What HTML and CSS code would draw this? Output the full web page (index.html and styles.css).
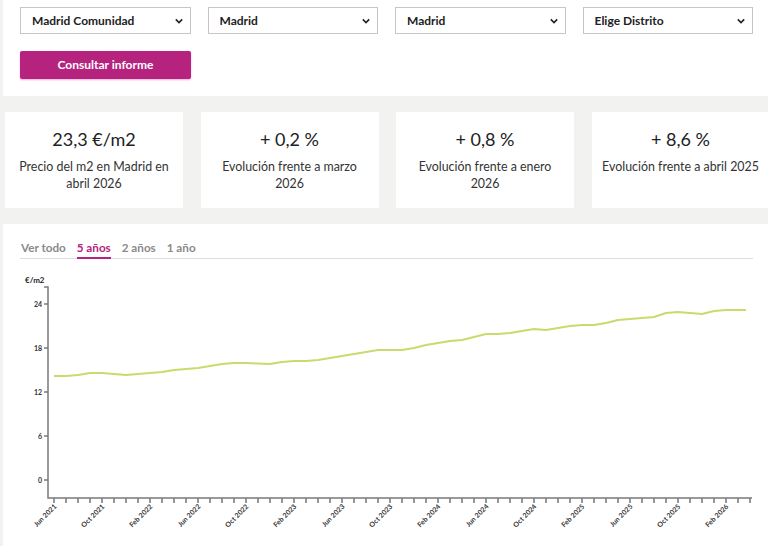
FILE: index.html
```html
<!DOCTYPE html>
<html lang="es">
<head>
    <meta charset="utf-8">
    <title>Precio del m2 en Madrid</title>
    <link rel="stylesheet" href="styles.css">
</head>
<body>
    <div class="filters">
        <div class="selects">
            <div class="select-wrap">
                <select><option>Madrid Comunidad</option></select>
                <svg class="chevron" viewBox="0 0 10 6"><path d="M1 1l4 4 4-4"/></svg>
            </div>
            <div class="select-wrap">
                <select><option>Madrid</option></select>
                <svg class="chevron" viewBox="0 0 10 6"><path d="M1 1l4 4 4-4"/></svg>
            </div>
            <div class="select-wrap">
                <select><option>Madrid</option></select>
                <svg class="chevron" viewBox="0 0 10 6"><path d="M1 1l4 4 4-4"/></svg>
            </div>
            <div class="select-wrap">
                <select><option>Elige Distrito</option></select>
                <svg class="chevron" viewBox="0 0 10 6"><path d="M1 1l4 4 4-4"/></svg>
            </div>
        </div>
        <button type="button" class="btn">Consultar informe</button>
    </div>

    <div class="cards">
        <div class="card">
            <div class="value">23,3 €/m2</div>
            <div class="label">Precio del m2 en Madrid en abril 2026</div>
        </div>
        <div class="card">
            <div class="value">+ 0,2 %</div>
            <div class="label">Evolución frente a marzo 2026</div>
        </div>
        <div class="card">
            <div class="value">+ 0,8 %</div>
            <div class="label">Evolución frente a enero 2026</div>
        </div>
        <div class="card">
            <div class="value">+ 8,6 %</div>
            <div class="label">Evolución frente a abril 2025</div>
        </div>
    </div>

    <div class="chart-panel">
        <div class="tabs">
            <span class="tab">Ver todo</span>
            <span class="tab active">5 años</span>
            <span class="tab">2 años</span>
            <span class="tab">1 año</span>
        </div>

        <!-- viewBox uses page coordinates so the chart lines up with the panel -->
        <svg class="chart" viewBox="3 262 765 284" width="765" height="284">
            <text class="unit" x="25" y="283">€/m2</text>

            <g class="axis">
                <path d="M44 287H48V498H752"/>
                <path d="M44 304h4M44 348h4M44 392h4M44 436h4M44 480h4"/>
                <path d="M54 498v5M66 498v5M78 498v5M90 498v5M102 498v5M114 498v5M126 498v5M138 498v5M150 498v5M162 498v5M174 498v5M186 498v5M198 498v5M210 498v5M222 498v5M234 498v5M246 498v5M258 498v5M270 498v5M282 498v5M294 498v5M306 498v5M318 498v5M330 498v5M342 498v5M354 498v5M366 498v5M378 498v5M390 498v5M402 498v5M414 498v5M426 498v5M438 498v5M450 498v5M462 498v5M474 498v5M486 498v5M498 498v5M510 498v5M522 498v5M534 498v5M546 498v5M558 498v5M570 498v5M582 498v5M594 498v5M606 498v5M618 498v5M630 498v5M642 498v5M654 498v5M666 498v5M678 498v5M690 498v5M702 498v5M714 498v5M726 498v5M738 498v5M750 498v5"/>
            </g>

            <g class="y-labels">
                <text x="42" y="306.5">24</text>
                <text x="42" y="350.5">18</text>
                <text x="42" y="394.5">12</text>
                <text x="42" y="438.5">6</text>
                <text x="42" y="482.5">0</text>
            </g>

            <g class="x-labels">
                <text transform="translate(57 507) rotate(-45)">Jun 2021</text>
                <text transform="translate(105 507) rotate(-45)">Oct 2021</text>
                <text transform="translate(153 507) rotate(-45)">Feb 2022</text>
                <text transform="translate(201 507) rotate(-45)">Jun 2022</text>
                <text transform="translate(249 507) rotate(-45)">Oct 2022</text>
                <text transform="translate(297 507) rotate(-45)">Feb 2023</text>
                <text transform="translate(345 507) rotate(-45)">Jun 2023</text>
                <text transform="translate(393 507) rotate(-45)">Oct 2023</text>
                <text transform="translate(441 507) rotate(-45)">Feb 2024</text>
                <text transform="translate(489 507) rotate(-45)">Jun 2024</text>
                <text transform="translate(537 507) rotate(-45)">Oct 2024</text>
                <text transform="translate(585 507) rotate(-45)">Feb 2025</text>
                <text transform="translate(633 507) rotate(-45)">Jun 2025</text>
                <text transform="translate(681 507) rotate(-45)">Oct 2025</text>
                <text transform="translate(729 507) rotate(-45)">Feb 2026</text>
            </g>

            <polyline class="line" points="54,376 66,376 78,375 90,373 102,373 114,374 126,375 138,374 150,373 162,372 174,370 186,369 198,368 210,366 222,364 234,363 246,363 258,363.5 270,364 282,362 294,361 306,361 318,360 330,358 342,356 354,354 366,352 378,350 390,350 402,350 414,348 426,345 438,343 450,341 462,340 474,337 486,334 498,334 510,333 522,331 534,329 546,330 558,328 570,326 582,325 594,325 606,323 618,320 630,319 642,318 654,317 666,313 678,312 690,313 702,314 714,311 726,310 738,310 746,310"/>
        </svg>
    </div>
</body>
</html>
```

FILE: styles.css
```css
body {
    font-family: Lato, "Noto Sans", sans-serif;
    background-color: #f2f2f0;
    color: #222;
    margin: 0;
    padding: 0;
    overflow: hidden;
}

.filters {
    margin-left: 3px;
    background-color: #fff;
    padding: 7px 15px 17px 17px;
}

.selects {
    display: grid;
    grid-template-columns: repeat(4, 1fr);
    gap: 17px;
}

.select-wrap {
    position: relative;
}

select {
    display: block;
    width: 100%;
    height: 27px;
    padding: 0 24px 0 11px;
    border: 1px solid #c6c6c6;
    border-radius: 0;
    background-color: #fff;
    font-family: inherit;
    font-size: 12px;
    font-weight: bold;
    color: #222;
    appearance: none;
    -webkit-appearance: none;
}

.chevron {
    position: absolute;
    right: 8px;
    top: 11px;
    width: 8px;
    height: 6px;
    fill: none;
    stroke: #222;
    stroke-width: 2;
    pointer-events: none;
}

.btn {
    display: block;
    margin-top: 17px;
    width: 171px;
    height: 28px;
    padding: 0 0 2px;
    background-color: #b5237f;
    color: #fff;
    border: none;
    border-radius: 2px;
    box-shadow: 0 1px 2px rgba(230, 120, 190, 0.6);
    font-family: inherit;
    font-size: 12px;
    font-weight: bold;
    cursor: pointer;
}

.cards {
    display: grid;
    grid-template-columns: repeat(4, 178px);
    gap: 17.5px;
    margin: 16px 0 0 5px;
}

.card {
    background-color: #fff;
    height: 96px;
    box-sizing: border-box;
    padding: 15px 8px 0;
    text-align: center;
}

.value {
    font-size: 18px;
    line-height: 24px;
    color: #222;
}

.label {
    margin-top: 7px;
    font-size: 12.4px;
    line-height: 17px;
    color: #333;
}

.chart-panel {
    margin: 16px 0 0 3px;
    background-color: #fff;
    padding: 15px 15px 0 17px;
    height: 322px;
    box-sizing: border-box;
}

.tabs {
    display: flex;
    gap: 11px;
    border-bottom: 1px solid #dedede;
    padding-left: 1px;
}

.tab {
    font-size: 11.7px;
    font-weight: bold;
    color: #8a8a8a;
    line-height: 16px;
    padding-bottom: 2px;
    border-bottom: 2px solid transparent;
    margin-bottom: -1px;
}

.tab.active {
    color: #b5237f;
    border-bottom-color: #b5237f;
}

.chart {
    display: block;
    margin: 3px 0 0 -17px;
}

.axis path {
    fill: none;
    stroke: #7a7a7a;
    stroke-width: 1.5;
}

.unit {
    font-size: 8px;
    font-weight: bold;
    fill: #222;
}

.y-labels text {
    font-size: 7px;
    font-weight: bold;
    fill: #333;
    text-anchor: end;
}

.x-labels text {
    font-size: 7px;
    font-weight: bold;
    fill: #333;
    text-anchor: end;
}

.line {
    fill: none;
    stroke: #c6dc6c;
    stroke-width: 2;
    stroke-linejoin: round;
}
```
